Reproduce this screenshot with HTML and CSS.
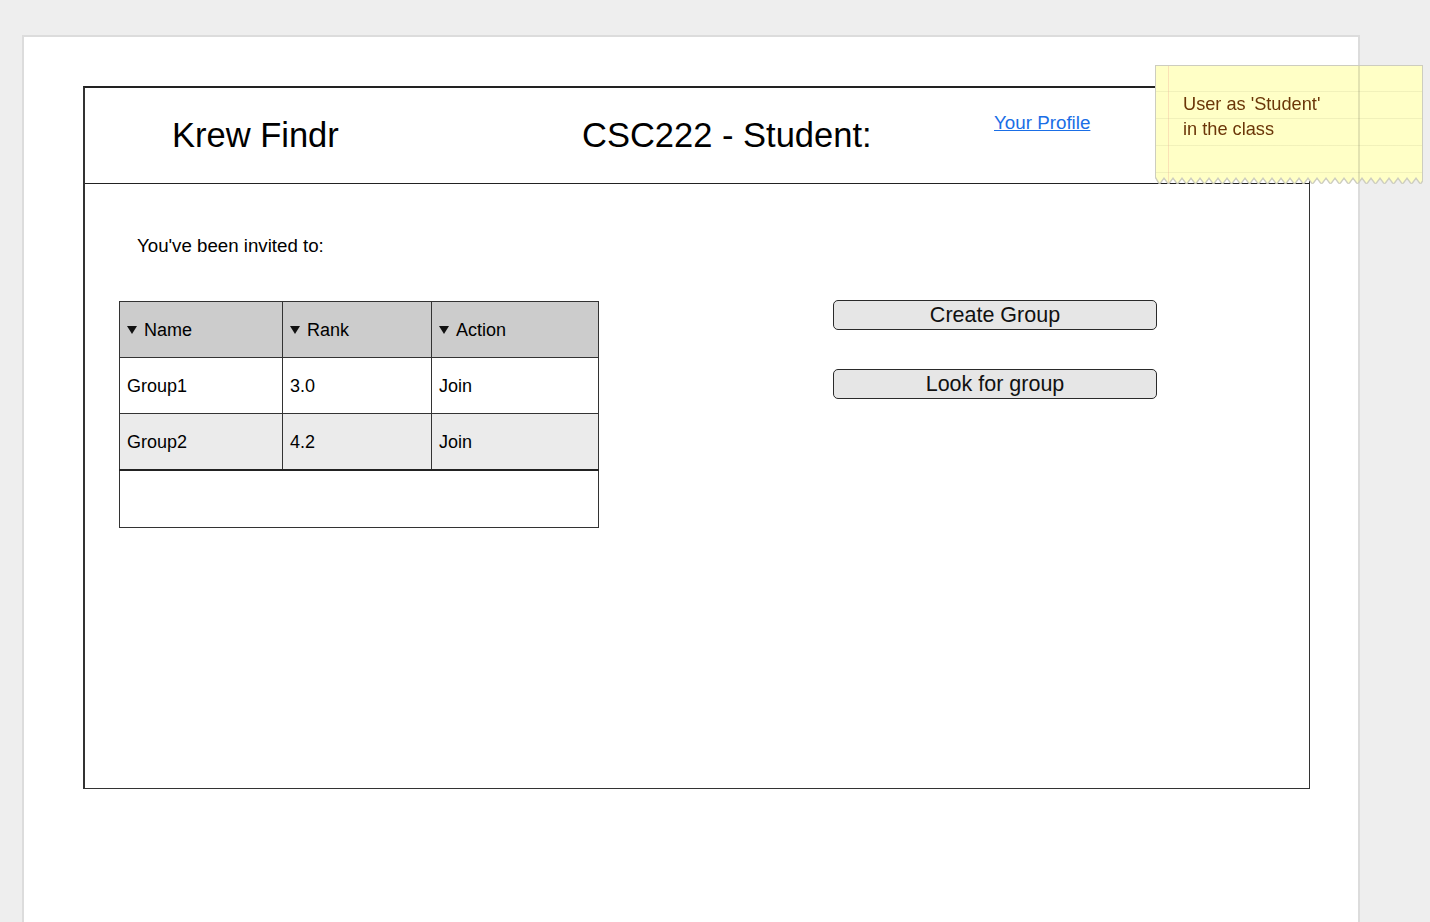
FILE: index.html
```html
<!DOCTYPE html>
<html>
<head>
<meta charset="utf-8">
<title>Krew Findr</title>
<link rel="stylesheet" href="styles.css">
</head>
<body>
<div class="page">
  <div class="frame">
    <header class="header">
      <div class="brand">Krew Findr</div>
      <div class="course">CSC222 - Student:</div>
      <a class="profile" href="#">Your Profile</a>
    </header>
    <main class="main">
      <section class="left">
        <p class="invited">You've been invited to:</p>
        <table class="groups">
          <thead>
            <tr>
              <th class="c1"><svg class="tri" width="10" height="8" viewBox="0 0 10 8"><polygon points="0,0 10,0 5,8" fill="#111"/></svg>Name</th>
              <th class="c2"><svg class="tri" width="10" height="8" viewBox="0 0 10 8"><polygon points="0,0 10,0 5,8" fill="#111"/></svg>Rank</th>
              <th class="c3"><svg class="tri" width="10" height="8" viewBox="0 0 10 8"><polygon points="0,0 10,0 5,8" fill="#111"/></svg>Action</th>
            </tr>
          </thead>
          <tbody>
            <tr class="odd"><td>Group1</td><td>3.0</td><td>Join</td></tr>
            <tr class="even"><td>Group2</td><td>4.2</td><td>Join</td></tr>
            <tr class="empty"><td colspan="3"></td></tr>
          </tbody>
        </table>
      </section>
      <section class="actions">
        <button class="btn">Create Group</button>
        <button class="btn">Look for group</button>
      </section>
    </main>
  </div>
</div>
<div class="note">
  <div class="paper">
    <p>User as 'Student'<br>in the class</p>
  </div>
</div>
</body>
</html>
```

FILE: styles.css
```css
html, body {
  margin: 0;
  padding: 0;
}
body {
  background: #eeeeee;
  font-family: "Liberation Sans", Arial, Helvetica, sans-serif;
  color: #000;
  height: 922px;
  overflow: hidden;
  position: relative;
}
.page {
  margin: 35px 0 0 22px;
  width: 1275px;
  min-height: 1000px;
  background: #ffffff;
  border: 2px solid #dcdcdc;
  border-bottom: none;
  padding-top: 49px;
  padding-left: 59px;
}
.frame {
  width: 1224px;
  border: 1px solid #333333;
  border-top: 2px solid #222222;
  border-left: 2px solid #333333;
}
.header {
  height: 95px;
  border-bottom: 1px solid #222222;
  display: flex;
  align-items: flex-start;
}
.brand {
  margin-left: 87px;
  margin-top: 28px;
  width: 410px;
  font-size: 34.5px;
  white-space: nowrap;
}
.course {
  margin-top: 28px;
  width: 412px;
  font-size: 34.5px;
  white-space: nowrap;
}
.profile {
  margin-top: 24px;
  font-size: 18.8px;
  color: #1a6ee6;
  text-decoration: underline;
}
.main {
  height: 604px;
  display: flex;
  align-items: flex-start;
}
.left {
  width: 748px;
  padding-left: 34px;
  box-sizing: border-box;
}
.invited {
  margin: 51px 0 0 18px;
  font-size: 18.7px;
  line-height: 21px;
}
.groups {
  margin-top: 45px;
  border-collapse: collapse;
  width: 480px;
  font-size: 18px;
  border: 1px solid #333333;
}
.groups th, .groups td {
  height: 54px;
  padding: 1px 0 0 7px;
  text-align: left;
  font-weight: normal;
  border: 1px solid #333333;
  vertical-align: middle;
}
.groups thead tr {
  background: #cccccc;
}
.groups .c1 { width: 155px; }
.groups .c2 { width: 141px; }
.groups .tri {
  display: inline-block;
  vertical-align: middle;
  margin: -2px 7px 0 0;
}
.groups .odd { background: #ffffff; }
.groups .even { background: #ebebeb; }
.groups .empty td {
  height: 55px;
  background: #ffffff;
  border-top: 2px solid #222222;
}
.actions {
  display: flex;
  flex-direction: column;
  gap: 39px;
  padding-top: 116px;
}
.btn {
  width: 324px;
  height: 30px;
  background: #e6e6e6;
  border: 1px solid #2a2a2a;
  border-radius: 5px;
  font-family: "Liberation Sans", Arial, Helvetica, sans-serif;
  font-size: 21.5px;
  color: #111;
  padding: 0;
  line-height: 26px;
}
.note {
  position: absolute;
  left: 1156px;
  top: 66px;
  width: 266px;
  height: 117px;
  filter: drop-shadow(1px 0 0 #cdcdbf) drop-shadow(-1px 0 0 #cdcdbf) drop-shadow(0 1px 0 #cdcdbf) drop-shadow(0 -1px 0 #cdcdbf);
}
.paper {
  width: 266px;
  height: 117px;
  overflow: hidden;
  background:
    linear-gradient(to right, transparent 202px, rgba(0,0,0,0.11) 202px, rgba(0,0,0,0.11) 204px, transparent 204px),
    linear-gradient(to right, transparent 12px, rgba(240,170,150,0.35) 12px, rgba(240,170,150,0.35) 13px, transparent 13px),
    repeating-linear-gradient(to bottom, transparent 0, transparent 25px, rgba(200,200,150,0.25) 25px, rgba(200,200,150,0.25) 26px, transparent 26px, transparent 27px),
    #ffffc6;
  clip-path: polygon(0 0, 268px 0, 268px 111px, 264.5px 117px, 260px 111px, 255.5px 117px, 251px 111px, 246.5px 117px, 242px 111px, 237.5px 117px, 233px 111px, 228.5px 117px, 224px 111px, 219.5px 117px, 215px 111px, 210.5px 117px, 206px 111px, 201.5px 117px, 197px 111px, 192.5px 117px, 188px 111px, 183.5px 117px, 179px 111px, 174.5px 117px, 170px 111px, 165.5px 117px, 161px 111px, 156.5px 117px, 152px 111px, 147.5px 117px, 143px 111px, 138.5px 117px, 134px 111px, 129.5px 117px, 125px 111px, 120.5px 117px, 116px 111px, 111.5px 117px, 107px 111px, 102.5px 117px, 98px 111px, 93.5px 117px, 89px 111px, 84.5px 117px, 80px 111px, 75.5px 117px, 71px 111px, 66.5px 117px, 62px 111px, 57.5px 117px, 53px 111px, 48.5px 117px, 44px 111px, 39.5px 117px, 35px 111px, 30.5px 117px, 26px 111px, 21.5px 117px, 17px 111px, 12.5px 117px, 8px 111px, 3.5px 117px, 0 111px);
}
.paper p {
  margin: 0;
  padding: 26px 0 0 27px;
  font-size: 18.2px;
  line-height: 25px;
  color: #6b3608;
}
```
